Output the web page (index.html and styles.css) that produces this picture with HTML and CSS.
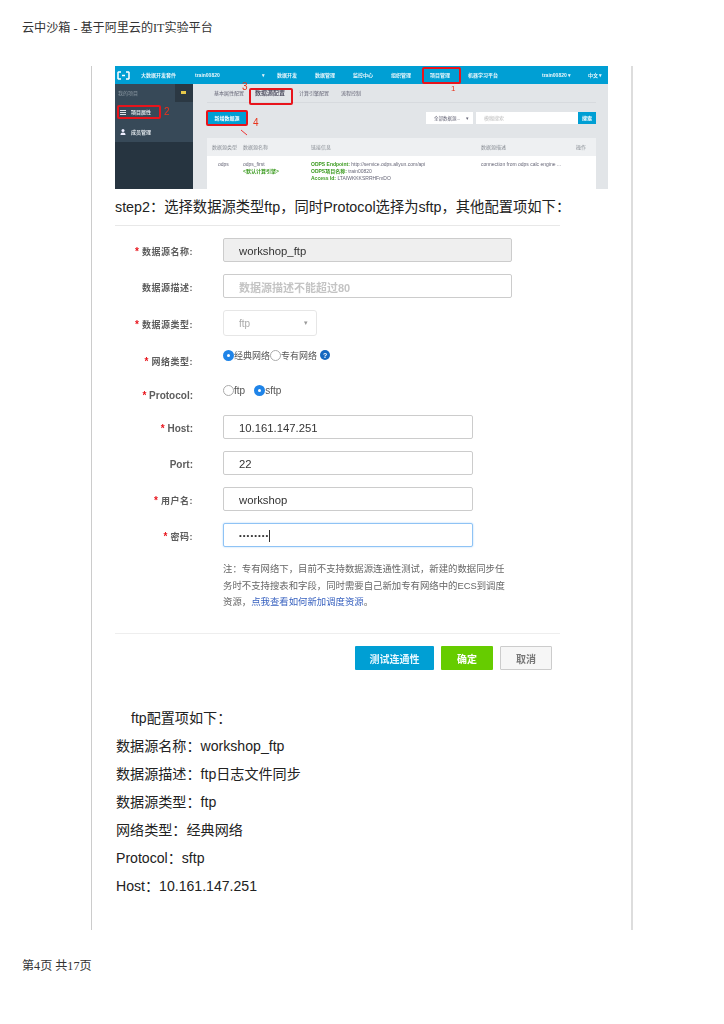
FILE: index.html
```html
<!DOCTYPE html>
<html lang="zh">
<head>
<meta charset="utf-8">
<title>云中沙箱</title>
<link rel="stylesheet" href="styles.css">
</head>
<body>
<header class="page-head">云中沙箱 - 基于阿里云的IT实验平台</header>
<main class="doc">
  <section class="shot">
    <div class="topbar">
      <span class="logo"><svg width="13" height="9" viewBox="0 0 13 9"><path d="M4 1H1.500L1 1.500v6l.5.5H4M9 1h2.500l.5.5v6l-.5.5H9M5 4.500h3" fill="none" stroke="#fff" stroke-width="1.500"/></svg></span>
      <span>大数据开发套件</span><span>train00820</span><span>▾</span>
      <span>数据开发</span><span>数据管理</span><span>监控中心</span><span>组织管理</span><span>项目管理</span><span>机器学习平台</span><span>train00820 ▾</span><span>中文 ▾</span>
    </div>
    <div class="shot-body">
      <aside class="side">
        <div class="side-top">
          <div class="side-head"><span>我的项目</span><b class="toggle"></b></div>
          <div class="side-item"><svg width="6" height="5" viewBox="0 0 6 5"><path d="M0 .5h6M0 2.500h6M0 4.500h6" stroke="#dfe5ea"/></svg>项目属性</div>
          <div class="side-item"><svg width="6" height="6" viewBox="0 0 6 6"><circle cx="3" cy="1.600" r="1.500" fill="#eef"/><path d="M.5 6c0-2 1-2.600 2.500-2.600S5.500 4 5.500 6z" fill="#eef"/></svg>成员管理</div>
        </div>
      </aside>
      <div class="pane">
        <nav class="tabs"><span>基本属性配置</span><span class="tab-on">数据源配置</span><span>计算引擎配置</span><span>流程控制</span></nav>
        <div class="tools">
          <span class="add-btn">新增数据源</span>
          <span class="filter">全部数据源... <i>▾</i></span>
          <span class="search">模糊搜索</span>
          <span class="search-btn">搜索</span>
        </div>
        <div class="table">
          <div class="tr th"><span>数据源类型</span><span>数据源名称</span><span>链接信息</span><span>数据源描述</span><span>操作</span></div>
          <div class="tr td">
            <span class="center">odps</span>
            <span>odps_first<br><em>&lt;默认计算引擎&gt;</em></span>
            <span><em>ODPS Endpoint:</em> http://service.odps.aliyun.com/api<br><em>ODPS项目名称:</em> train00820<br><em>Access Id:</em> LTAIWKKKSRRHFmDO</span>
            <span>connection from odps calc engine ...</span>
            <span></span>
          </div>
        </div>
      </div>
    </div>
    <i class="mark box-nav"></i><i class="mark box-tab"></i><i class="mark box-add"></i><i class="mark box-side"></i>
    <b class="num n1">1</b><b class="num n2">2</b><b class="num n3">3</b><b class="num n4">4</b>
    <svg class="arrow" width="8" height="7" viewBox="0 0 8 7"><path d="M1 1l6 5" stroke="#e33" stroke-width="1"/></svg>
  </section>

  <p class="step">step2：选择数据源类型ftp，同时Protocol选择为sftp，其他配置项如下：</p>

  <section class="form">
    <div class="row"><label class="lbl"><i>*</i> 数据源名称:</label><span class="input wide ro">workshop_ftp</span></div>
    <div class="row"><label class="lbl">数据源描述:</label><span class="input wide ph">数据源描述不能超过80</span></div>
    <div class="row"><label class="lbl"><i>*</i> 数据源类型:</label><span class="select">ftp<i>▾</i></span></div>
    <div class="row r-radio"><label class="lbl"><i>*</i> 网络类型:</label>
      <span class="radios"><b class="radio on"></b>经典网络<b class="radio"></b>专有网络<b class="help">?</b></span></div>
    <div class="row r-radio r-proto"><label class="lbl lat"><i>*</i> Protocol:</label>
      <span class="radios"><b class="radio"></b>ftp<b class="radio on gap"></b>sftp</span></div>
    <div class="row"><label class="lbl lat"><i>*</i> Host:</label><span class="input">10.161.147.251</span></div>
    <div class="row"><label class="lbl lat">Port:</label><span class="input">22</span></div>
    <div class="row"><label class="lbl"><i>*</i> 用户名:</label><span class="input">workshop</span></div>
    <div class="row"><label class="lbl"><i>*</i> 密码:</label><span class="input focus"><span class="dots">••••••••</span><b class="caret"></b></span></div>
    <p class="note">注：专有网络下，目前不支持数据源连通性测试，新建的数据同步任务时不支持搜表和字段，同时需要自己新加专有网络中的ECS到调度资源，<a>点我查看如何新加调度资源</a>。</p>
    <footer class="actions"><span class="btn test">测试连通性</span><span class="btn ok">确定</span><span class="btn cancel">取消</span></footer>
  </section>

  <div class="config">
    <p class="indent">ftp配置项如下：</p>
    <p>数据源名称：workshop_ftp</p>
    <p>数据源描述：ftp日志文件同步</p>
    <p>数据源类型：ftp</p>
    <p>网络类型：经典网络</p>
    <p>Protocol：sftp</p>
    <p>Host：10.161.147.251</p>
  </div>
</main>
<footer class="page-foot">第4页 共17页</footer>
</body>
</html>
```
FILE: styles.css
```css
* { box-sizing: border-box; }
html, body { margin: 0; padding: 0; background: #fff; }
body { width: 724px; height: 1024px; overflow: hidden; font-family: "Liberation Sans", "Noto Sans CJK SC", sans-serif; color: #222; }
p { margin: 0; }
em, i { font-style: normal; }

.page-head { height: 66px; padding: 20px 0 0 22px; font: 12.100px/16px "Liberation Serif", "Noto Sans CJK SC", serif; color: #333; }
.page-foot { padding: 28px 0 0 22px; font: 12.100px/16px "Liberation Serif", "Noto Sans CJK SC", serif; color: #333; }

.doc { margin-left: 91px; width: 542px; height: 864px; border-left: 1px solid #ccc; border-right: 2px solid #ddd; padding-left: 23px; }

/* embedded screenshot */
.shot { position: relative; width: 493px; height: 123px; overflow: hidden; font-size: 5px; line-height: 7px; filter: blur(.45px); color: #667; }
.topbar { display: grid; grid-template-columns: 26px 54px 67px 15px 38px 38px 38px 39px 38px 74px 46px 20px; align-items: center; height: 18px; background: #009fd4; color: #e8f6fb; font-weight: bold; white-space: nowrap; }
.logo { display: flex; padding-left: 2px; }
.shot-body { display: flex; height: 105px; }
.side { width: 78px; background: #263440; color: #dfe5ea; }
.side-top { height: 58px; background: #374958; }
.side-head { display: flex; justify-content: space-between; align-items: center; height: 18px; padding-left: 3px; color: #8c99a3; }
.toggle { display: flex; width: 18px; height: 18px; background: #2b3843; }
.toggle::after { content: ""; width: 5px; height: 3px; margin: 7px 0 0 6px; background: #e6c84a; }
.side-item { display: flex; align-items: center; gap: 5px; height: 20px; padding-left: 5px; font-weight: bold; }
.pane { flex: 1; background: #e2e5e8; padding: 0 12px 0 14px; }
.tabs { display: flex; align-items: center; height: 19px; border-bottom: 1px solid #d7dade; }
.tabs span:nth-child(1) { width: 36px; margin-left: 7px; }
.tabs .tab-on { width: 46px; padding-left: 5px; font-size: 6px; font-weight: bold; white-space: nowrap; color: #556; }
.tabs span:nth-child(3) { width: 42px; margin-left: 3px; }
.tools { display: flex; align-items: center; height: 35px; padding-bottom: 5px; }
.add-btn { display: flex; justify-content: center; align-items: center; width: 38px; height: 12px; margin: 0 180px 0 1px; background: #009fd4; color: #fff; font-weight: bold; }
.filter { display: flex; justify-content: space-between; align-items: center; width: 47px; height: 12px; padding: 0 4px 0 8px; background: #fff; margin-right: 3px; font-size: 4.500px; white-space: nowrap; }
.search { display: flex; align-items: center; width: 102px; height: 12px; padding-left: 8px; background: #fff; color: #bbb; }
.search-btn { display: flex; justify-content: center; align-items: center; width: 18px; height: 12px; background: #009fd4; color: #fff; font-weight: bold; }
.table { background: #fff; }
.tr { display: grid; grid-template-columns: 31px 68px 170px 95px 1fr; padding-left: 5px; }
.th { align-items: center; height: 18px; background: #eef0f2; color: #8a8f96; }
.td { padding-top: 5px; height: 40px; white-space: nowrap; }
.td em { color: #3a9a1e; font-weight: bold; }
.center { padding-left: 6px; }
.mark { position: absolute; border: 2px solid #e8141c; border-radius: 2px; }
.box-nav { left: 307px; top: 1px; width: 39px; height: 17px; }
.box-tab { left: 134px; top: 22px; width: 44px; height: 17px; }
.box-add { left: 91px; top: 44px; width: 42px; height: 16px; }
.box-side { left: 2px; top: 39px; width: 44px; height: 14px; }
.num { position: absolute; color: #e8341c; font: 400 10px/10px "Liberation Sans", sans-serif; }
.n1 { left: 336px; top: 18px; font-size: 8px; }
.n2 { left: 49px; top: 41px; }
.n3 { left: 127px; top: 16px; }
.n4 { left: 138px; top: 52px; }
.arrow { position: absolute; left: 125px; top: 63px; }

.step { height: 36px; padding-top: 10px; font-size: 14.300px; line-height: 17px; white-space: nowrap; color: #222; }

/* dialog picture */
.form { width: 445px; height: 409px; border-top: 1px solid #e8e8e8; border-bottom: 1px solid #eee; padding-top: 12px; position: relative; filter: blur(.3px); }
.row { display: flex; align-items: center; height: 24px; margin-bottom: 12px; }
.lbl { width: 78px; padding-top: 2px; text-align: right; font-size: 9px; font-weight: bold; color: #5d5d5d; letter-spacing: .5px; white-space: nowrap; }
.lbl.lat { font-size: 10px; letter-spacing: 0; }
.lbl i { color: #e8141c; font-size: 10px; letter-spacing: 0; }
.input { display: flex; align-items: center; width: 250px; height: 24px; margin-left: 30px; padding: 1px 0 0 15px; border: 1px solid #ccc; border-radius: 2px; font-size: 11.300px; color: #333; background: #fff; }
.wide { width: 289px; }
.ro { background: #efefef; }
.ph { color: #c4c4c4; font-size: 11px; font-weight: bold; }
.select { display: flex; justify-content: space-between; align-items: center; width: 94px; height: 26px; margin-left: 30px; padding: 0 8px 0 15px; border: 1px solid #e6e6e6; border-radius: 3px; font-size: 10px; color: #aaa; }
.select i { font-size: 7px; color: #999; }
.r-radio { align-items: flex-start; height: 24px; margin-bottom: 10px; }
.r-radio .lbl { padding-top: 6px; }
.row:nth-child(3) { height: 26px; margin-bottom: 13px; }
.radios { display: flex; align-items: center; height: 12px; margin-left: 30px; font-size: 9px; color: #555; }
.r-proto { margin-bottom: 8px; }
.r-proto .radios { margin-top: 1px; font-size: 10px; }
.r-proto .lbl { padding-top: 7px; }
.radio { width: 11px; height: 11px; border: 1px solid #aaa; border-radius: 50%; background: #fff; }
.radio.on { border: 4px solid #1f84e8; }
.radio.gap { margin-left: 9px; }
.help { display: flex; justify-content: center; align-items: center; width: 10px; height: 10px; margin-left: 3px; border-radius: 50%; background: #1468c0; color: #fff; font-size: 7px; }
.focus { border-color: #8fc3f5; box-shadow: 0 0 2px #a8d2f8; }
.dots { font-size: 8px; letter-spacing: 1px; }
.caret { width: 1px; height: 12px; background: #333; }
.note { width: 284px; margin: 14px 0 0 108px; font-size: 9.400px; line-height: 16.500px; color: #666; }
.note a { color: #3a63c0; }
.actions { position: absolute; left: 240px; top: 420px; display: flex; gap: 7px; }
.btn { display: flex; justify-content: center; align-items: center; height: 24px; font-size: 10px; font-weight: bold; border-radius: 1px; }
.test { width: 79px; background: #009fd4; color: #e8f8ff; }
.ok { width: 52px; background: #66cc00; color: #fff; }
.cancel { width: 52px; background: #f6f6f6; border: 1px solid #ccc; color: #777; }

.config { padding: 70px 0 0 1px; font-size: 14.100px; line-height: 28px; white-space: nowrap; color: #222; }
.indent { padding-left: 15px; }
```
